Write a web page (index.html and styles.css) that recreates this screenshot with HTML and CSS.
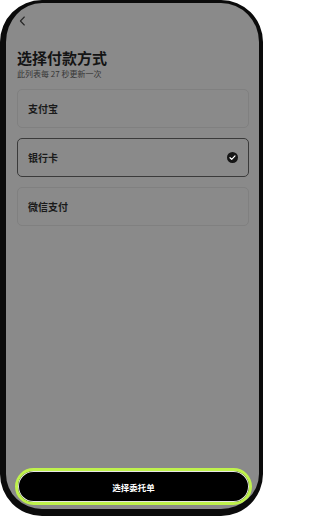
FILE: index.html
```html
<!DOCTYPE html>
<html lang="zh-CN">
<head>
<meta charset="utf-8">
<title>选择付款方式</title>
<link rel="stylesheet" href="styles.css">
</head>
<body>
<div class="phone">
  <div class="screen">
    <div class="topbar">
      <svg class="back" width="7" height="10" viewBox="0 0 7 10" aria-label="返回"><path d="M5.3 1 L1.4 5 L5.3 9" fill="none" stroke="#262626" stroke-width="1.1" stroke-linecap="round" stroke-linejoin="round"/></svg>
    </div>
    <h1 class="title">选择付款方式</h1>
    <p class="subtitle">此列表每 27 秒更新一次</p>
    <ul class="options">
      <li class="option">支付宝</li>
      <li class="option selected">
        <span>银行卡</span>
        <svg class="check" width="11" height="11" viewBox="0 0 11 11"><circle cx="5.5" cy="5.5" r="5.5" fill="#161616"/><path d="M3 5.7 L4.7 7.3 L8 3.9" fill="none" stroke="#fff" stroke-width="1.2" stroke-linecap="round" stroke-linejoin="round"/></svg>
      </li>
      <li class="option">微信支付</li>
    </ul>
    <div class="footer">
      <button class="cta" type="button">选择委托单</button>
    </div>
  </div>
</div>
</body>
</html>
```

FILE: styles.css
```css
html, body {
  margin: 0;
  padding: 0;
  background: #ffffff;
}

body {
  font-family: "Noto Sans CJK SC", "Noto Sans", sans-serif;
}

.phone {
  width: 263px;
  height: 516px;
  box-sizing: border-box;
  border-style: solid;
  border-color: #0b0b0b;
  border-width: 3px 4px 7px 6px;
  border-radius: 42px;
  background: #8a8a8a;
  overflow: hidden;
  display: flex;
  flex-direction: column;
}

.screen {
  flex: 1;
  display: flex;
  flex-direction: column;
  padding: 0 10px 4px 11px;
}

.topbar {
  padding-top: 13px;
  padding-left: 2px;
  height: 10px;
}

.back {
  display: block;
}

.title {
  margin: 22px 0 0;
  font-size: 15px;
  line-height: 20px;
  font-weight: 700;
  color: #141414;
}

.subtitle {
  margin: 0;
  font-size: 8px;
  line-height: 11px;
  color: #363636;
}

.options {
  list-style: none;
  margin: 10px 0 0;
  padding: 0;
  display: flex;
  flex-direction: column;
  gap: 10px;
}

.option {
  height: 39px;
  box-sizing: border-box;
  border: 1px solid #808080;
  border-radius: 5px;
  padding: 0 10px;
  display: flex;
  align-items: center;
  justify-content: space-between;
  font-size: 10px;
  font-weight: 700;
  color: #1a1a1a;
}

.option.selected {
  border-color: #3a3a3a;
}

.check {
  display: block;
}

.footer {
  margin-top: auto;
}

.cta {
  display: block;
  width: 237px;
  height: 37px;
  margin-left: -2px;
  box-sizing: border-box;
  border: 3px solid #bff24c;
  box-shadow: inset 0 0 0 1px #e6e6e6;
  border-radius: 19px;
  background: #000000;
  color: #ffffff;
  font-family: "Noto Sans CJK SC", "Noto Sans", sans-serif;
  font-size: 8.5px;
  font-weight: 700;
  padding: 0;
}
```
